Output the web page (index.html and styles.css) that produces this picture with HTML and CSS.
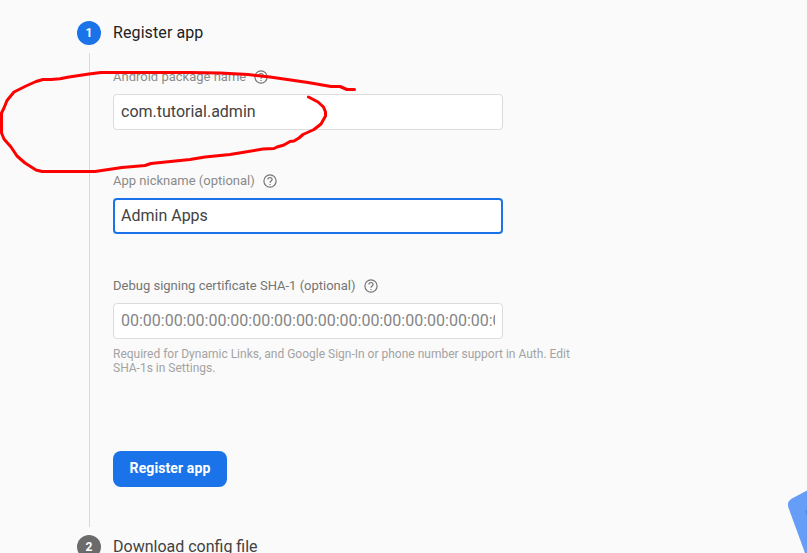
FILE: index.html
```html
<!DOCTYPE html>
<html lang="en">
<head>
<meta charset="utf-8">
<title>Register app</title>
<link rel="stylesheet" href="styles.css">
</head>
<body>
<svg class="defs" width="0" height="0">
  <symbol id="help" viewBox="0 0 16 16"><circle cx="8" cy="8" r="6.100"/><path d="M5.900 6.600a2.100 2.100 0 1 1 4.200 0c0 1.400-2.100 1.500-2.100 3.100M8 10.900v1.200"/></symbol>
</svg>
<main class="stepper">
  <section class="step">
    <div class="rail"><span class="badge">1</span><span class="line"></span></div>
    <div class="content">
      <h2 class="title active">Register app</h2>
      <form class="form">
        <div class="field">
          <label class="label">Android package name <svg class="help"><use href="#help"/></svg></label>
          <div class="input"><span class="value">com.tutorial.admin</span></div>
        </div>
        <div class="field nickname">
          <label class="label">App nickname (optional) <svg class="help"><use href="#help"/></svg></label>
          <div class="input focused"><span class="value">Admin Apps</span></div>
        </div>
        <div class="field certificate">
          <label class="label dark">Debug signing certificate SHA-1 (optional) <svg class="help"><use href="#help"/></svg></label>
          <div class="input"><span class="value placeholder">00:00:00:00:00:00:00:00:00:00:00:00:00:00:00:00:00:00:00:00</span></div>
          <p class="hint">Required for Dynamic Links, and Google Sign-In or phone number support in Auth. Edit SHA-1s in Settings.</p>
        </div>
        <button class="button" type="button">Register app</button>
      </form>
    </div>
  </section>
  <section class="step">
    <div class="rail"><span class="badge inactive">2</span></div>
    <div class="content"><h2 class="title">Download config file</h2></div>
  </section>
</main>
<svg class="overlay" viewBox="0 0 807 553">
  <path class="card" d="M820 483.500 L791 499 Q787 502 788.200 507 L805 553 L820 590Z"/>
  <path class="card-mark" d="M805.500 511 L810 508 V524Z"/>
  <path class="scribble" d="M354.500 89.500H347L340 86.500H331L308 82.500L270 77L248 74.500L220 73L190 72.500H101L89 74L69 77L60 78.800L51 79.500H43L36 81.500L26 86L14 92L7 100.500L4 108L1.500 113V133L4 139L11 147L17 156L25 163L36 170L42 171.500H95L122 167.500L145 165.500L151 163.500L190 159.500L205 157L230 154.500L263 149L274 148.500L277 147L284 145L290 141.500L294 141L299 138L303 134.500L314 129.500L321 124L325.500 116V112L323.500 107L318 102L308.500 97"/>
</svg>
</body>
</html>
```
FILE: styles.css
```css
* { box-sizing: border-box; }
body {
  margin: 0;
  height: 553px;
  overflow: hidden;
  background: #fafafa;
  font-family: Roboto, sans-serif;
  color: #424242;
}
.defs { position: absolute; }
.stepper { padding: 21px 0 0 77px; }
.step { display: flex; gap: 12px; }
.step:first-child { height: 514px; }
.rail {
  width: 24px;
  display: flex;
  flex-direction: column;
  align-items: center;
  gap: 8px;
}
.badge {
  width: 24px;
  height: 24px;
  flex: none;
  border-radius: 50%;
  background: #1a73e8;
  color: #fff;
  font-size: 12px;
  font-weight: 700;
  line-height: 24px;
  text-align: center;
}
.badge.inactive { background: #6b6b6b; }
.line { width: 1px; height: 474px; background: #d9d9d9; }
.title {
  margin: 0;
  font-size: 16px;
  font-weight: 400;
  line-height: 24px;
  white-space: nowrap;
}
.title.active { color: #212121; letter-spacing: 0.1px; }
.form { padding-top: 24px; width: 470px; }
.field { height: 104px; }
.nickname { height: 105px; }
.certificate { height: 173px; }
.label {
  display: flex;
  align-items: center;
  gap: 7px;
  height: 16px;
  margin-bottom: 9px;
  font-size: 13px;
  line-height: 14px;
  color: #8a8a8a;
}
.label.dark { color: #757575; }
.help {
  width: 16px;
  height: 16px;
  fill: none;
  stroke: #757575;
  stroke-width: 1.2;
}
.input {
  display: flex;
  align-items: center;
  width: 390px;
  height: 36px;
  padding: 0 7px;
  border: 1px solid #dcdcdc;
  border-radius: 4px;
  background: #fff;
}
.input.focused { border: 2px solid #1a73e8; padding: 0 6px; }
.value {
  flex: 1;
  overflow: hidden;
  white-space: nowrap;
  font-size: 16px;
  line-height: 24px;
}
.placeholder { color: #858585; }
.hint {
  margin: 8px 0 0;
  font-size: 12px;
  line-height: 14px;
  color: #a3a3a3;
}
.button {
  display: block;
  width: 114px;
  height: 36px;
  padding: 0 0 1px;
  border: 0;
  border-radius: 8px;
  background: #1a73e8;
  color: #fff;
  font: 700 14px/35px Roboto, sans-serif;
  letter-spacing: 0.1px;
}
.overlay {
  position: absolute;
  top: 0;
  left: 0;
  width: 807px;
  height: 553px;
  pointer-events: none;
}
.card { fill: #669df6; }
.card-mark { fill: #4285f4; }
.scribble {
  fill: none;
  stroke: #f00;
  stroke-width: 3;
  stroke-linecap: round;
  stroke-linejoin: round;
}
```
